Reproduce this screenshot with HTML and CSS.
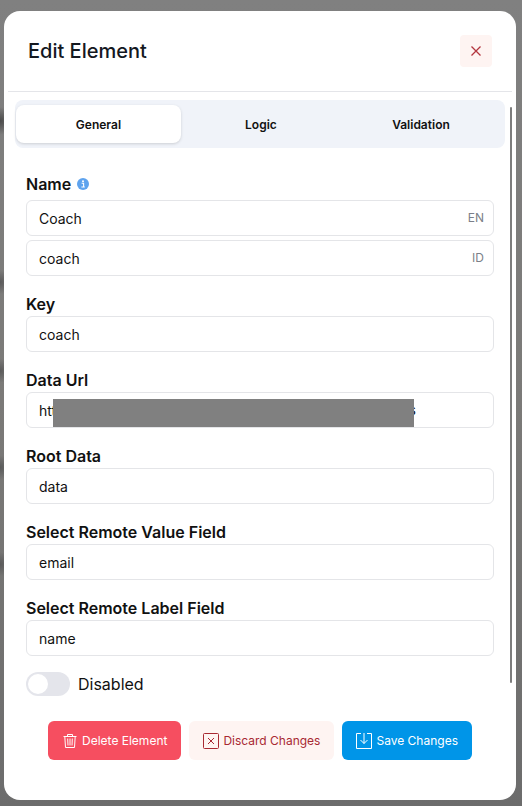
FILE: index.html
```
<!DOCTYPE html>
<html lang="en">

<head>
    <meta charset="UTF-8">
    <meta name="viewport" content="width=device-width, initial-scale=1.0">
    <title>Edit Element</title>
    <link rel="stylesheet" href="styles.css">
</head>

<body>
    <div class="dialog" role="dialog" aria-labelledby="dialog-title">
        <div class="dialog-header">
            <h1 id="dialog-title">Edit Element</h1>
            <button type="button" class="close-button" aria-label="Close">
                <svg width="12" height="12" viewBox="0 0 12 12" fill="none" stroke="currentColor" stroke-width="1.3">
                    <path d="M1.5 1.5l9 9M10.5 1.5l-9 9" />
                </svg>
            </button>
        </div>

        <form class="dialog-form">
            <div class="scroll-area">
                <div class="scroll-content">
                    <!-- Tabs -->
                    <div class="tabs" role="tablist">
                        <button type="button" class="tab active" role="tab" aria-selected="true">General</button>
                        <button type="button" class="tab" role="tab" aria-selected="false">Logic</button>
                        <button type="button" class="tab" role="tab" aria-selected="false">Validation</button>
                    </div>

                    <!-- Fields -->
                    <div class="fields">
                        <div class="field field-name">
                            <label for="name-en">Name
                                <svg class="info-icon" width="12" height="12" viewBox="0 0 12 12">
                                    <circle cx="6" cy="6" r="6" fill="#5ea3ee" />
                                    <circle cx="6" cy="3.2" r="1" fill="#fff" />
                                    <path d="M4.6 5.2h2v3.6M4.4 9h3.4" fill="none" stroke="#fff" stroke-width="1.1" />
                                </svg>
                            </label>
                            <div class="input-wrap">
                                <input type="text" id="name-en" value="Coach">
                                <span class="lang">EN</span>
                            </div>
                            <div class="input-wrap">
                                <input type="text" id="name-id" value="coach" aria-label="Name (ID)">
                                <span class="lang">ID</span>
                            </div>
                        </div>
                        <div class="field">
                            <label for="key">Key</label>
                            <input type="text" id="key" value="coach">
                        </div>
                        <div class="field">
                            <label for="data-url">Data Url</label>
                            <div class="input-wrap">
                                <input type="text" id="data-url" value="htt">
                                <span class="url-end">s</span>
                                <span class="redacted"></span>
                            </div>
                        </div>
                        <div class="field">
                            <label for="root-data">Root Data</label>
                            <input type="text" id="root-data" value="data">
                        </div>
                        <div class="field">
                            <label for="value-field">Select Remote Value Field</label>
                            <input type="text" id="value-field" value="email">
                        </div>
                        <div class="field">
                            <label for="label-field">Select Remote Label Field</label>
                            <input type="text" id="label-field" value="name">
                        </div>
                        <div class="switch-row">
                            <input type="checkbox" class="switch" id="disabled">
                            <label for="disabled">Disabled</label>
                        </div>
                    </div>
                </div>
                <div class="scrollbar"></div>
            </div>

            <!-- Actions -->
            <div class="actions">
                <button type="button" class="btn btn-delete">
                    <svg width="16" height="16" viewBox="0 0 16 16" fill="none" stroke="currentColor">
                        <path d="M1.5 3.5h13M5.5 3.5v-2h5v2M2.8 3.5l.7 11h9l.7-11M5.7 5.5l.3 7M8 5.5v7M10.3 5.5l-.3 7" />
                    </svg>
                    Delete Element
                </button>
                <button type="button" class="btn btn-discard">
                    <svg width="16" height="16" viewBox="0 0 16 16" fill="none" stroke="currentColor">
                        <rect x=".5" y=".5" width="15" height="15" rx="1" />
                        <path d="M5 5l6 6M11 5l-6 6" />
                    </svg>
                    Discard Changes
                </button>
                <button type="submit" class="btn btn-save">
                    <svg width="16" height="16" viewBox="0 0 16 16" fill="none" stroke="currentColor">
                        <path d="M5 .5H.5v15h15V.5H11M8 0v10.5M4.5 7L8 10.5 11.5 7" />
                    </svg>
                    Save Changes
                </button>
            </div>
        </form>
    </div>
</body>

</html>
```
FILE: styles.css
```
* {
    box-sizing: border-box;
}

body {
    margin: 0;
    padding: 11px 6px 6px 4px;
    min-height: 100vh;
    display: flex;
    /* dark spots of the page behind the overlay, then the overlay itself */
    background:
        radial-gradient(circle at 0 15%, #4a4a4a, transparent 14px),
        radial-gradient(circle at 0 35%, #5a5a5a, transparent 12px),
        radial-gradient(circle at 0 46%, #5a5a5a, transparent 12px),
        radial-gradient(circle at 0 58%, #5a5a5a, transparent 12px),
        radial-gradient(circle at 0 70%, #5a5a5a, transparent 12px),
        linear-gradient(#808080, #7b7a78 50%, #6c6c6c);
    font-family: Inter, "Liberation Sans", sans-serif;
    color: #111;
}

button,
input {
    font: inherit;
    color: inherit;
}

button {
    border: none;
    cursor: pointer;
}

/* Dialog */
.dialog {
    flex: 1;
    display: flex;
    flex-direction: column;
    padding: 0 4px;
    background: #fff;
    border-radius: 16px;
}

.dialog-header {
    display: flex;
    align-items: center;
    justify-content: space-between;
    height: 81px;
    padding: 0 20px;
    border-bottom: 1px solid #e4e5e9;
}

h1 {
    margin: 0;
    font-size: 20px;
    font-weight: 500;
    color: #14181f;
}

.close-button {
    display: flex;
    align-items: center;
    justify-content: center;
    width: 32px;
    height: 32px;
    padding: 0;
    border-radius: 4px;
    background: #fef4f2;
    color: #b3353f;
}

.dialog-form {
    flex: 1;
    display: flex;
    flex-direction: column;
}

/* Scroll area */
.scroll-area {
    display: flex;
    gap: 5px;
    padding-left: 7px;
}

.scroll-content {
    flex: 1;
    padding-top: 8px;
}

.scrollbar {
    width: 2px;
    margin: 15px 0 13px;
    border-radius: 1px;
    background: #7d7d7d;
}

/* Tabs */
.tabs {
    display: flex;
    padding: 5px 4px 5px 1px;
    border-radius: 8px;
    background: #f0f3f9;
}

.tab {
    flex: 1;
    height: 38px;
    padding: 0;
    border-radius: 8px;
    background: none;
    font-size: 12px;
    font-weight: 600;
}

.tab.active {
    flex: 0 0 34%;
    background: #fff;
    box-shadow: 0 1px 3px rgba(0, 0, 0, 0.15);
}

/* Fields */
.fields {
    display: flex;
    flex-direction: column;
    gap: 16px;
    padding: 24px 11px 0;
}

.field {
    display: flex;
    flex-direction: column;
}

.field label {
    font-size: 16px;
    font-weight: 600;
    line-height: 24px;
}

.field-name {
    gap: 4px;
}

.info-icon {
    margin-left: 2px;
}

.input-wrap {
    position: relative;
}

.field input {
    display: block;
    width: 100%;
    height: 36px;
    padding: 0 12px;
    border: 1px solid #e4e5e8;
    border-radius: 6px;
    background: #fff;
    font-size: 14px;
}

.lang {
    position: absolute;
    top: 0;
    right: 10px;
    font-size: 12px;
    line-height: 36px;
    color: #7b7f88;
}

.url-end {
    position: absolute;
    top: 0;
    right: 78px;
    font-size: 14px;
    line-height: 36px;
}

.redacted {
    position: absolute;
    top: 7px;
    bottom: 1px;
    left: 27px;
    right: 80px;
    background: #808080;
}

/* Switch */
.switch-row {
    display: flex;
    align-items: center;
    gap: 8px;
    font-size: 16px;
    line-height: 24px;
}

.switch {
    appearance: none;
    width: 44px;
    height: 24px;
    margin: 0;
    padding: 2px;
    border-radius: 12px;
    background: #e4e5eb;
}

.switch::before {
    content: "";
    display: block;
    width: 20px;
    height: 20px;
    border-radius: 50%;
    background: #fff;
}

.switch:checked::before {
    margin-left: auto;
}

/* Actions */
.actions {
    display: flex;
    justify-content: center;
    gap: 8px;
    padding: 25px 0 40px;
}

.btn {
    display: flex;
    align-items: center;
    gap: 4px;
    height: 39px;
    padding: 0 14px;
    border-radius: 6px;
    font-size: 12px;
    white-space: nowrap;
}

.btn-delete {
    background: #f64e60;
    color: #fff;
}

.btn-discard {
    background: #fef4f2;
    color: #a82932;
}

.btn-save {
    background: #0095e8;
    color: #fff;
}
```
